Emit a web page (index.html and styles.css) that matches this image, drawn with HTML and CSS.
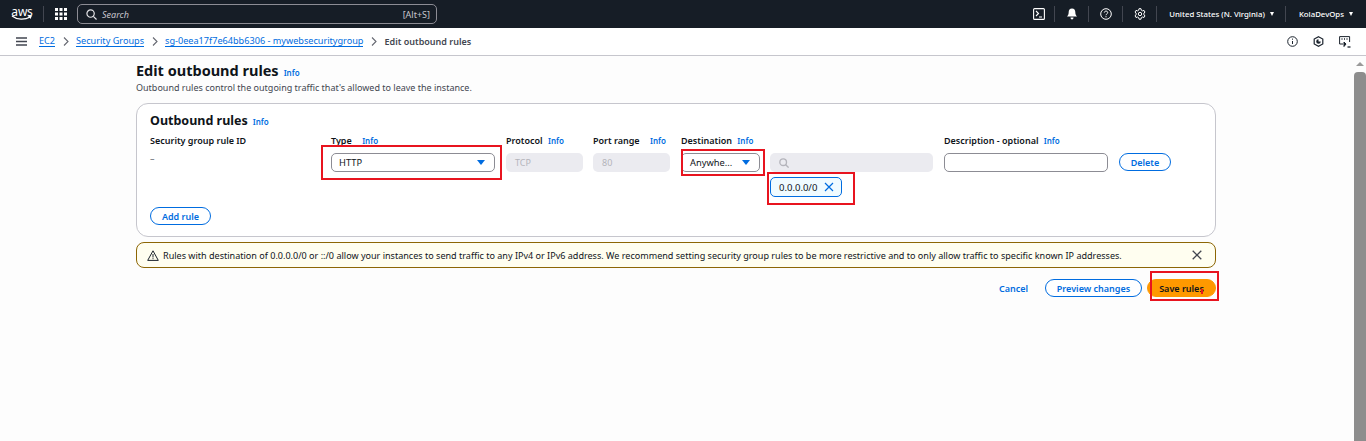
FILE: index.html
```html
<!DOCTYPE html>
<html lang="en">
<head>
  <meta charset="UTF-8">
  <title>Edit outbound rules</title>
  <link rel="stylesheet" href="styles.css">
</head>
<body>

<header class="topnav">
  <div class="logo">
    <span class="logo-text">aws</span>
    <svg width="22" height="6" viewBox="0 0 22 6"><path d="M1 1c5 4 13 4 18 1" fill="none" stroke="#fff" stroke-width="1.3"/><path d="M17 1l4-.5-1.500 3.500z" fill="#fff"/></svg>
  </div>
  <span class="nav-sep"></span>
  <svg class="grid-icon" width="12" height="12" viewBox="0 0 12 12" fill="#fff">
    <rect width="3" height="3"/><rect x="4.500" width="3" height="3"/><rect x="9" width="3" height="3"/>
    <rect y="4.500" width="3" height="3"/><rect x="4.500" y="4.500" width="3" height="3"/><rect x="9" y="4.500" width="3" height="3"/>
    <rect y="9" width="3" height="3"/><rect x="4.500" y="9" width="3" height="3"/><rect x="9" y="9" width="3" height="3"/>
  </svg>
  <div class="searchbox">
    <svg width="11" height="11" viewBox="0 0 12 12" fill="none" stroke="#e5e5e8" stroke-width="1.300"><circle cx="5" cy="5" r="4"/><path d="M8 8l3.500 3.500"/></svg>
    <span class="search-text">Search</span>
    <span class="search-key">[Alt+S]</span>
  </div>
  <div class="nav-right">
    <svg class="nav-icon" width="12" height="12" viewBox="0 0 12 12" fill="none" stroke="#fff" stroke-width="1.100"><rect x=".6" y=".6" width="10.800" height="10.800" rx="1"/><path d="M3 3l2.500 2.500L3 8M6 9h3"/></svg>
    <span class="nav-sep"></span>
    <svg class="nav-icon" width="12" height="12" viewBox="0 0 12 12" fill="#fff"><path d="M6 .5c2.300 0 3.300 1.700 3.300 3.500 0 2 .4 3.200 1.700 4.500H1C2.300 7.200 2.700 6 2.700 4 2.700 2.200 3.700.5 6 .5z"/><path d="M4.500 9.500h3C7.500 10.700 6.800 11.500 6 11.500s-1.500-.8-1.500-2z"/></svg>
    <span class="nav-sep"></span>
    <svg class="nav-icon" width="12" height="12" viewBox="0 0 12 12" fill="none" stroke="#fff" stroke-width="1"><circle cx="6" cy="6" r="5.300"/><path d="M4.300 4.600C4.400 3.600 5.100 3.100 6 3.100c1 0 1.700.6 1.700 1.500 0 1.300-1.700 1.300-1.700 2.600"/><path d="M6 8.200v1.100"/></svg>
    <span class="nav-sep"></span>
    <svg class="nav-icon" width="12" height="12" viewBox="0 0 12 12" fill="none" stroke="#fff" stroke-width="1"><circle cx="6" cy="6" r="1.700"/><path d="M5 .7h2l.3 1.500 1.300.7 1.400-.5 1 1.700-1.100 1v1.700l1.100 1-1 1.700-1.400-.5-1.300.7-.3 1.500H5l-.3-1.500-1.300-.7-1.400.5-1-1.700 1.100-1V5.100l-1.100-1 1-1.700 1.400.5 1.300-.7z"/></svg>
    <span class="nav-sep"></span>
    <span class="nav-menu region">United States (N. Virginia)<i class="caret"></i></span>
    <span class="nav-sep"></span>
    <span class="nav-menu account">KolaDevOps<i class="caret"></i></span>
  </div>
</header>

<nav class="crumbbar">
  <svg class="menu-icon" width="11" height="9" viewBox="0 0 11 9" stroke="#424650" stroke-width="1.300"><path d="M0 1h11M0 4.500h11M0 8h11"/></svg>
  <a class="crumb">EC2</a>
  <svg class="chev" width="6" height="9" viewBox="0 0 6 9"><path d="M1 .5l4 4-4 4" fill="none" stroke="#656871" stroke-width="1.100"/></svg>
  <a class="crumb">Security Groups</a>
  <svg class="chev" width="6" height="9" viewBox="0 0 6 9"><path d="M1 .5l4 4-4 4" fill="none" stroke="#656871" stroke-width="1.100"/></svg>
  <a class="crumb">sg-0eea17f7e64bb6306 - mywebsecuritygroup</a>
  <svg class="chev" width="6" height="9" viewBox="0 0 6 9"><path d="M1 .5l4 4-4 4" fill="none" stroke="#656871" stroke-width="1.100"/></svg>
  <span class="crumb-current">Edit outbound rules</span>
  <div class="crumb-icons">
    <svg width="11" height="11" viewBox="0 0 11 11" fill="none" stroke="#1b232d" stroke-width="1"><circle cx="5.500" cy="5.500" r="4.800"/><path d="M5.500 5v3M5.500 2.600v1.100"/></svg>
    <svg width="11" height="11" viewBox="0 0 11 11" fill="none" stroke="#1b232d" stroke-width="1.200"><path d="M5.500.7l4.300 2.400v4.800l-4.300 2.400-4.300-2.400V3.100z"/><path d="M5.500 3.200a2.300 2.300 0 1 0 2.300 2.300H5.500z" fill="#1b232d" stroke="none"/></svg>
    <svg width="12" height="12" viewBox="0 0 12 12" fill="none" stroke="#1b232d" stroke-width="1"><path d="M4 8H.6V.6h10V6"/><path d="M2.500 3h1M5 3h1M7.500 3h1" stroke-width="1.300"/><path d="M5 6l2 2-2 2.500z" fill="#1b232d"/><path d="M8.500 11h3" stroke-width="1.300"/></svg>
  </div>
</nav>

<div class="page">
  <main class="content">
    <div class="title-row">
      <h1>Edit outbound rules</h1>
      <a class="info">Info</a>
    </div>
    <p class="subtitle">Outbound rules control the outgoing traffic that's allowed to leave the instance.</p>

    <section class="card">
      <div class="card-head">
        <h2>Outbound rules</h2>
        <a class="info">Info</a>
      </div>

      <div class="rules">
        <div class="rule-label">Security group rule ID</div>
        <div class="rule-label">Type <a class="info gap-type">Info</a></div>
        <div class="rule-label">Protocol <a class="info">Info</a></div>
        <div class="rule-label">Port range <a class="info gap-port">Info</a></div>
        <div class="rule-label">Destination <a class="info">Info</a></div>
        <div></div>
        <div class="rule-label">Description - optional <a class="info">Info</a></div>
        <div></div>

        <div class="rule-id">–</div>
        <div class="select select-type"><span>HTTP</span><i class="select-caret"></i></div>
        <div class="field-off field-short">TCP</div>
        <div class="field-off field-short">80</div>
        <div class="select select-dest"><span>Anywhe...</span><i class="select-caret"></i></div>
        <div class="dest-col">
          <div class="field-off field-search">
            <svg width="10" height="10" viewBox="0 0 12 12" fill="none" stroke="#b4b4bb" stroke-width="1.600"><circle cx="5" cy="5" r="4"/><path d="M8 8l3.500 3.500"/></svg>
          </div>
          <div class="chip">
            <span>0.0.0.0/0</span>
            <svg width="10" height="10" viewBox="0 0 10 10" stroke="#006ce0" stroke-width="1.200"><path d="M1 1l8 8M9 1l-8 8"/></svg>
          </div>
        </div>
        <div class="field-desc"></div>
        <div><button class="btn btn-small">Delete</button></div>
      </div>

      <button class="btn btn-add">Add rule</button>
    </section>

    <div class="alert">
      <svg width="12" height="11" viewBox="0 0 12 11" fill="none" stroke="#1b232d" stroke-width="1"><path d="M6 .8l5.300 9.600H.7z" stroke-linejoin="round"/><path d="M6 4v3.500M6 8.200v1"/></svg>
      <span class="alert-text">Rules with destination of 0.0.0.0/0 or ::/0 allow your instances to send traffic to any IPv4 or IPv6 address. We recommend setting security group rules to be more restrictive and to only allow traffic to specific known IP addresses.</span>
      <svg class="alert-close" width="10" height="10" viewBox="0 0 10 10" stroke="#424650" stroke-width="1.300"><path d="M.7.7l8.600 8.600M9.300.7L.7 9.300"/></svg>
    </div>

    <div class="actions">
      <a class="cancel">Cancel</a>
      <button class="btn btn-preview">Preview changes</button>
      <button class="btn btn-save">Save rules</button>
    </div>
  </main>

  <div class="scrollbar">
    <i class="scroll-up"></i>
    <div class="scroll-thumb"></div>
  </div>
</div>

<!-- red boxes drawn on top of the screenshot -->
<div class="mark mark-type"></div>
<div class="mark mark-dest"></div>
<div class="mark mark-chip"></div>
<div class="mark mark-save"></div>
<div class="cursor"></div>

</body>
</html>
```

FILE: styles.css
```css
* {
  box-sizing: border-box;
}

html, body {
  height: 100%;
}

body {
  margin: 0;
  font-family: "Noto Sans", Arial, sans-serif;
  font-size: 9px;
  color: #0f141a;
  background: #fdfdfd;
  overflow: hidden;
  display: flex;
  flex-direction: column;
}

a {
  text-decoration: none;
}

/* top bar */
.topnav {
  height: 28px;
  flex: none;
  background: #161d26;
  color: #fff;
  display: flex;
  align-items: center;
  padding-left: 12px;
}

.logo {
  width: 20px;
  display: flex;
  flex-direction: column;
  align-items: center;
  line-height: 9px;
}

.logo-text {
  font-size: 12px;
  font-weight: 400;
  letter-spacing: -.2px;
}

.logo svg {
  margin-top: -1px;
}

.nav-sep {
  width: 1px;
  height: 16px;
  background: #424650;
}

.topnav > .nav-sep {
  margin-left: 11px;
}

.grid-icon {
  margin-left: 11px;
}

.searchbox {
  margin-left: 10px;
  width: 360px;
  height: 20px;
  border: 1px solid #8c8c94;
  border-radius: 5px;
  display: flex;
  align-items: center;
  padding: 0 6px 0 8px;
  color: #c6c6cd;
}

.search-text {
  margin-left: 5px;
  font-style: italic;
}

.search-key {
  margin-left: auto;
}

.nav-right {
  margin-left: auto;
  display: flex;
  align-items: center;
  padding-right: 13px;
}

.nav-icon {
  margin: 0 10px 0 11px;
}

.nav-icon:first-child {
  margin-right: 9px;
}

.nav-menu {
  font-weight: 500;
  font-size: 7.800px;
  color: #fff;
  display: flex;
  align-items: center;
}

.region {
  margin: 0 11px 0 12px;
}

.account {
  margin-left: 13px;
}

.caret {
  margin-left: 5px;
  border-left: 2.500px solid transparent;
  border-right: 2.500px solid transparent;
  border-top: 4px solid #fff;
}

/* breadcrumb bar */
.crumbbar {
  height: 28px;
  flex: none;
  background: #fff;
  border-bottom: 1px solid #c6c6cd;
  display: flex;
  align-items: center;
  padding: 0 15px 0 16px;
}

.menu-icon {
  margin-right: 12px;
}

.crumb {
  color: #006ce0;
  border-bottom: 1px solid #006ce0;
  line-height: 10px;
  font-size: 9.150px;
}

.chev {
  margin: 0 7.500px;
}

.crumb-current {
  font-weight: 600;
  color: #424650;
}

.crumb-icons {
  margin-left: auto;
  display: flex;
  align-items: center;
  gap: 15px;
}

/* page */
.page {
  flex: 1;
  display: flex;
  min-height: 0;
}

.content {
  flex: 1;
  padding: 5px 138px 0 136px;
}

.scrollbar {
  width: 12px;
  flex: none;
  padding-top: 6px;
}

.scroll-up {
  display: block;
  margin: 0 auto;
  width: 0;
  border-left: 4px solid transparent;
  border-right: 4px solid transparent;
  border-bottom: 4px solid #9a9a9a;
}

.scroll-thumb {
  margin-top: 6px;
  height: 370px;
  background: #8d8d8d;
  border-radius: 4px 4px 0 0;
}

.title-row {
  display: flex;
  align-items: baseline;
  gap: 5px;
}

h1 {
  margin: 0;
  font-size: 14.500px;
  line-height: 18px;
  font-weight: 700;
}

.info {
  color: #006ce0;
  font-size: 8px;
  font-weight: 600;
}

.subtitle {
  margin: 2px 0 0;
  color: #424650;
  line-height: 13px;
}

.card {
  margin-top: 9px;
  height: 134px;
  background: #fff;
  border: 1px solid #c6c6cd;
  border-radius: 12px;
  padding: 8px 13px 0;
}

.card-head {
  display: flex;
  align-items: baseline;
  gap: 5px;
}

h2 {
  margin: 0;
  font-size: 12.500px;
  line-height: 17px;
  font-weight: 700;
}

.rules {
  margin-top: 5px;
  display: grid;
  grid-template-columns: 181px 175px 87px 88px 89px 174px 175px 1fr;
  grid-template-rows: 14px auto;
  row-gap: 5px;
}

.rule-label {
  font-weight: 600;
  line-height: 14px;
  white-space: nowrap;
}

.rule-label .info {
  margin-left: 3px;
}

.rule-label .gap-type {
  margin-left: 8px;
}

.rule-label .gap-port {
  margin-left: 8px;
}

.rule-id {
  color: #656871;
  line-height: 11px;
}

.select {
  height: 19px;
  background: #fff;
  border: 1px solid #8c8c94;
  border-radius: 5px;
  display: flex;
  align-items: center;
  justify-content: space-between;
  padding: 0 9px 0 7px;
  font-size: 9.300px;
}

.select-type {
  width: 164px;
}

.select-dest {
  width: 79px;
  padding-left: 8px;
}

.select-caret {
  border-left: 4px solid transparent;
  border-right: 4px solid transparent;
  border-top: 5px solid #006ce0;
}

.field-off {
  height: 19px;
  background: #ebebf0;
  border-radius: 5px;
  color: #b4b4bb;
  display: flex;
  align-items: center;
  padding: 0 9px;
}

.field-short {
  width: 77px;
}

.dest-col {
  display: flex;
  flex-direction: column;
  align-items: flex-start;
  gap: 5px;
}

.field-search {
  width: 163px;
}

.chip {
  height: 20px;
  width: 72px;
  background: #f0fbff;
  border: 1px solid #006ce0;
  border-radius: 5px;
  display: flex;
  align-items: center;
  justify-content: space-between;
  padding: 0 7px 0 8px;
  font-size: 9.500px;
}

.field-desc {
  width: 164px;
  height: 19px;
  background: #fff;
  border: 1px solid #8c8c94;
  border-radius: 5px;
}

.btn {
  font-family: inherit;
  font-size: 9px;
  font-weight: 600;
  padding: 0;
  border: 1px solid #006ce0;
  border-radius: 10px;
  color: #006ce0;
  background: #fff;
  height: 18px;
}

.btn-small {
  width: 52px;
}

.btn-add {
  display: block;
  margin-top: 10px;
  width: 61px;
}

.alert {
  margin-top: 5px;
  height: 26px;
  background: #fffef0;
  border: 1px solid #8d6605;
  border-radius: 8px;
  display: flex;
  align-items: center;
  padding: 0 13px 0 10px;
}

.alert-text {
  margin-left: 4px;
  color: #0f141a;
  font-size: 9.050px;
}

.alert-close {
  margin-left: auto;
}

.actions {
  margin-top: 11px;
  display: flex;
  justify-content: flex-end;
  align-items: center;
}

.cancel {
  color: #006ce0;
  font-weight: 600;
  margin-right: 17px;
}

.btn-preview {
  width: 97px;
  margin-right: 5px;
}

.btn-save {
  width: 69px;
  background: #ff9900;
  border-color: #ff9900;
  color: #0f141a;
}

/* red annotation boxes */
.mark {
  position: absolute;
  border: 2px solid #e8141f;
}

.mark-type {
  left: 321px;
  top: 145px;
  width: 181px;
  height: 35px;
}

.mark-dest {
  left: 681px;
  top: 149px;
  width: 84px;
  height: 27px;
}

.mark-chip {
  left: 767px;
  top: 172px;
  width: 88px;
  height: 33px;
}

.mark-save {
  left: 1150px;
  top: 271px;
  width: 69px;
  height: 30px;
}

.cursor {
  position: absolute;
  left: 1201px;
  top: 289px;
  width: 2px;
  height: 5px;
  background: #e8141f;
}
```
